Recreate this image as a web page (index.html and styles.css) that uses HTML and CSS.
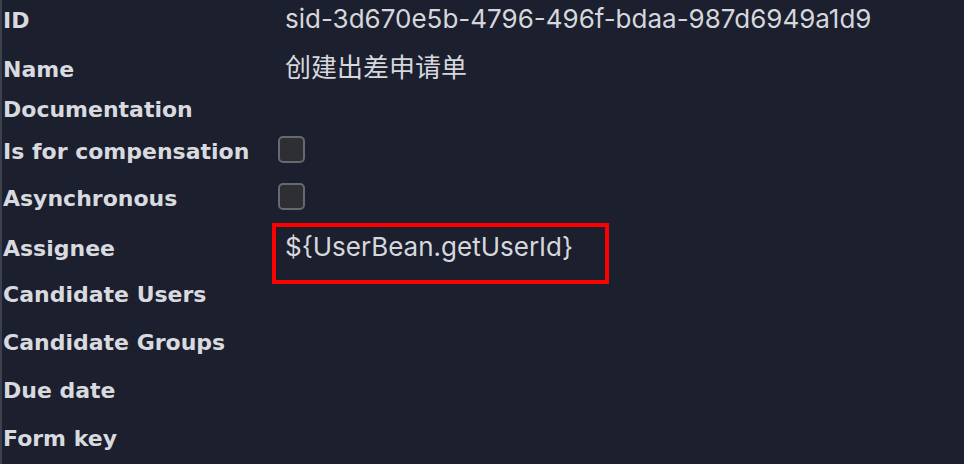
FILE: index.html
```html
<!DOCTYPE html>
<html lang="zh">
<head>
<meta charset="utf-8">
<title>Properties</title>
<link rel="stylesheet" href="styles.css">
</head>
<body>
<div class="panel">
  <div class="row r1"><div class="label">ID</div><div class="value">sid-3d670e5b-4796-496f-bdaa-987d6949a1d9</div></div>
  <div class="row r2"><div class="label">Name</div><div class="value">创建出差申请单</div></div>
  <div class="row r3"><div class="label">Documentation</div><div class="value"></div></div>
  <div class="row r4"><div class="label">Is for compensation</div><div class="check"></div></div>
  <div class="row r5"><div class="label">Asynchronous</div><div class="check"></div></div>
  <div class="row r6"><div class="label">Assignee</div><div class="value highlighted">${UserBean.getUserId}<span class="mark"></span></div></div>
  <div class="row r7"><div class="label">Candidate Users</div><div class="value"></div></div>
  <div class="row r8"><div class="label">Candidate Groups</div><div class="value"></div></div>
  <div class="row r9"><div class="label">Due date</div><div class="value"></div></div>
  <div class="row r10"><div class="label">Form key</div><div class="value"></div></div>
</div>
</body>
</html>
```
FILE: styles.css
```css
html, body {
  margin: 0;
  padding: 0;
  background: #1b1f2e;
  width: 964px;
  height: 464px;
  overflow: hidden;
}
.panel {
  box-sizing: border-box;
  height: 464px;
  border-left: 2px solid #3d414c;
  padding-top: 5px;
  display: flex;
  flex-direction: column;
}
.row {
  display: flex;
  align-items: baseline;
  flex: 0 0 auto;
}
.r1 { height: 49px; }
.r2 { height: 42px; }
.r3 { height: 42px; }
.r4 { height: 47px; }
.r5, .r6, .r7, .r8, .r9, .r10 { height: 48px; }
.label {
  flex: 0 0 283px;
  box-sizing: border-box;
  padding-left: 1px;
  font-family: "DejaVu Sans", sans-serif;
  font-weight: bold;
  font-size: 22px;
  line-height: 28px;
  color: #d9dadf;
  white-space: nowrap;
}
.value {
  position: relative;
  font-family: Inter, "Noto Sans CJK SC", sans-serif;
  font-size: 26px;
  line-height: 28px;
  color: #d6d7dd;
  white-space: nowrap;
}
.check {
  align-self: flex-start;
  margin-top: -2px;
  margin-left: -7px;
  width: 27px;
  height: 27px;
  box-sizing: border-box;
  border: 2px solid #67696f;
  border-radius: 5px;
  background: #2e2f33;
}
.mark {
  position: absolute;
  left: -13px;
  top: -10px;
  width: 337px;
  height: 61px;
  box-sizing: border-box;
  border: 4px solid #ff0000;
}
```
